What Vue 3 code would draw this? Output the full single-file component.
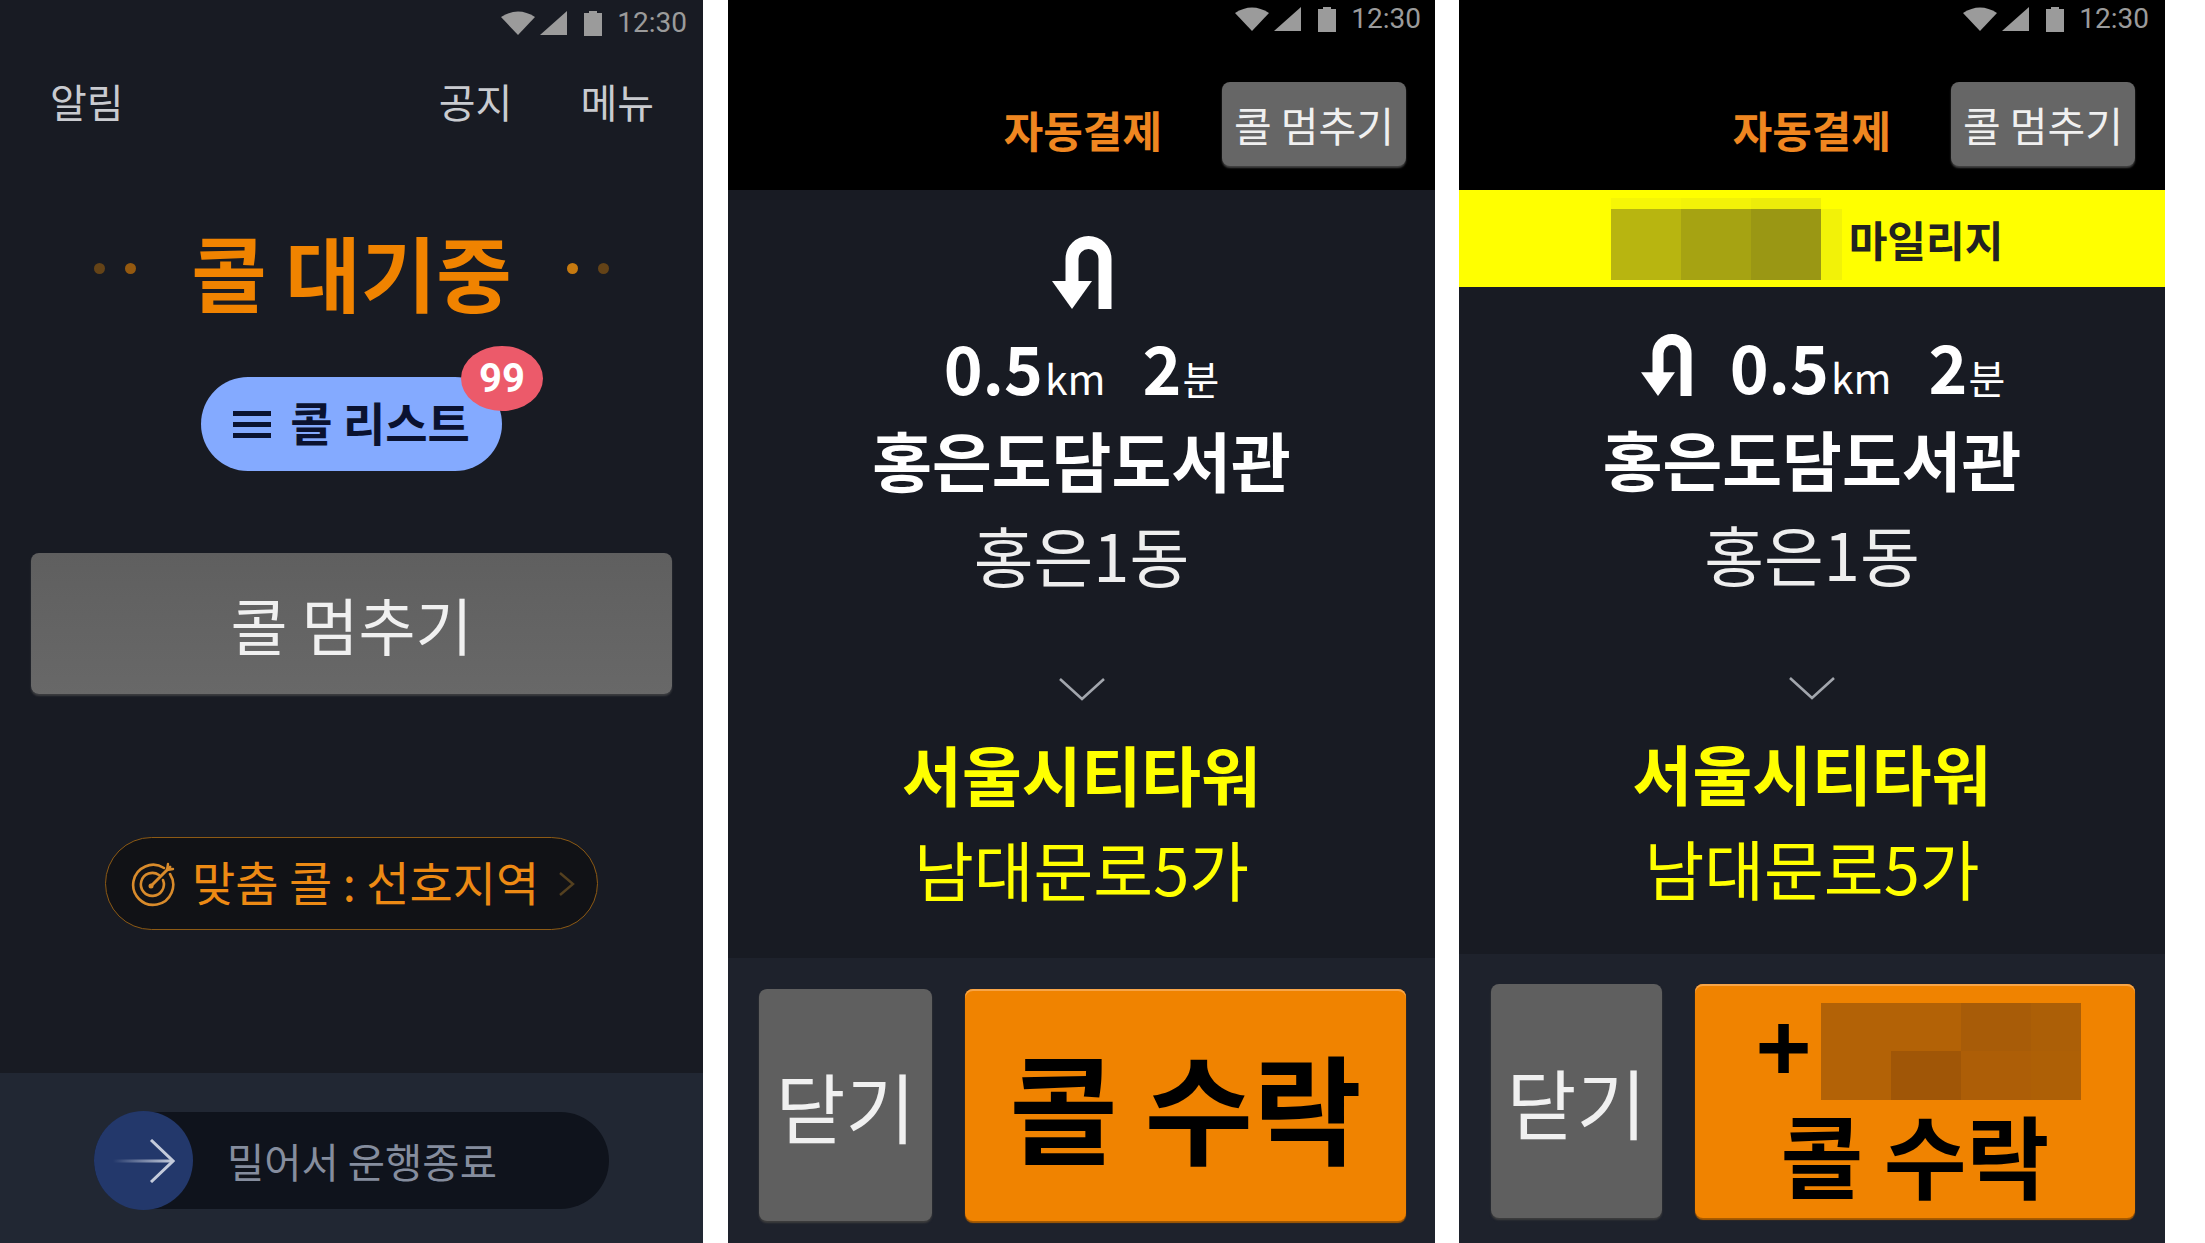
<template>
  <div class="screens">
    <!-- 대기 화면 -->
    <section class="phone idle">
      <div class="status">
        <svg class="wifi" viewBox="0 0 34 24"><path d="M0 6Q17-5 34 6L17 24Z" /></svg>
        <svg class="signal" viewBox="0 0 27 24"><path d="M27 0V24H0Z" /></svg>
        <svg class="battery" viewBox="0 0 18 25"><path d="M5 0H13V2H18V25H0V2H5Z" /></svg>
        <span class="time">12:30</span>
      </div>
      <nav class="nav">
        <span>알림</span>
        <div class="nav-right">
          <span>공지</span>
          <span>메뉴</span>
        </div>
      </nav>
      <div class="title-row">
        <div class="dots">
          <i class="dot dim"></i>
          <i class="dot"></i>
        </div>
        <h1 class="title">콜 대기중</h1>
        <div class="dots">
          <i class="dot bright"></i>
          <i class="dot dim"></i>
        </div>
      </div>
      <button class="list-btn">
        <span class="burger"><i></i><i></i><i></i></span>
        <span class="list-text">콜 리스트</span>
        <b class="badge">99</b>
      </button>
      <button class="stop-big">콜 멈추기</button>
      <div class="pill">
        <svg class="target" viewBox="0 0 46 46" fill="none" stroke="#d98b2b" stroke-width="2.6" stroke-linecap="round">
          <path d="M34 7A20 20 0 1 0 40 13" />
          <path d="M29 14A11.500 11.500 0 1 0 33 19" />
          <path d="M21 25L40 6" stroke-width="3" />
          <path d="M38 3L37 9L43 8" stroke-width="2.400" />
          <circle cx="21" cy="25" r="2.500" fill="#d98b2b" stroke="none" />
        </svg>
        <span class="pill-text">맞춤 콜 : 선호지역</span>
        <svg class="pill-arrow" viewBox="0 0 17 24" fill="none" stroke="#54401f" stroke-width="2.400"><path d="M2 1L15 12L2 23" /></svg>
      </div>
      <div class="idle-bottom">
        <div class="slider">
          <div class="knob">
            <svg viewBox="0 0 62 44" width="62" height="44" fill="none" stroke-width="3">
              <defs>
                <linearGradient id="shaft">
                  <stop offset="0" stop-color="#c4cbdb" stop-opacity="0" />
                  <stop offset="1" stop-color="#c4cbdb" />
                </linearGradient>
              </defs>
              <path d="M0 20.500H59V23.500H0Z" fill="url(#shaft)" stroke="none" />
              <path d="M38 1L60 22L38 43" stroke="#c4cbdb" />
            </svg>
          </div>
          <span class="slider-text">밀어서 운행종료</span>
        </div>
      </div>
    </section>

    <!-- 콜 수신 화면 -->
    <section v-for="call in calls" :key="call.id" class="phone incoming" :class="{ mileage: call.mileage }">
      <header class="top">
        <div class="status">
          <svg class="wifi" viewBox="0 0 34 24"><path d="M0 6Q17-5 34 6L17 24Z" /></svg>
          <svg class="signal" viewBox="0 0 27 24"><path d="M27 0V24H0Z" /></svg>
          <svg class="battery" viewBox="0 0 18 25"><path d="M5 0H13V2H18V25H0V2H5Z" /></svg>
          <span class="time">12:30</span>
        </div>
        <div class="top-row">
          <span class="auto-pay">자동결제</span>
          <button class="stop-small">콜 멈추기</button>
        </div>
      </header>

      <div v-if="call.mileage" class="band">
        <div class="band-blur">
          <i v-for="(c, i) in bandCells" :key="i" :style="{ background: c }"></i>
        </div>
        <span class="band-text">마일리지</span>
      </div>

      <main class="route">
        <svg v-if="!call.mileage" class="uturn" viewBox="0 0 60 73">
          <path d="M53 73V23A16.500 16.500 0 0 0 20 23V46" fill="none" stroke="#fff" stroke-width="13" />
          <path d="M0 45H40L20 73Z" fill="#fff" />
        </svg>
        <div class="metrics">
          <svg v-if="call.mileage" class="uturn inline" viewBox="0 0 60 73">
            <path d="M53 73V23A16.500 16.500 0 0 0 20 23V46" fill="none" stroke="#fff" stroke-width="13" />
            <path d="M0 45H40L20 73Z" fill="#fff" />
          </svg>
          <b class="num">0.5</b><span class="unit">km</span>
          <b class="num second">2</b><span class="unit small">분</span>
        </div>
        <div class="place bold">홍은도담도서관</div>
        <div class="place sub">홍은1동</div>
        <svg class="down" viewBox="0 0 46 24" fill="none" stroke="#a2a6ad" stroke-width="2.600"><path d="M1 2L23 22L45 2" /></svg>
        <div class="place bold dest">서울시티타워</div>
        <div class="place sub dest second-line">남대문로5가</div>
      </main>

      <footer class="actions">
        <button class="close">닫기</button>
        <button class="accept">
          <div v-if="call.mileage" class="bonus">
            <span class="plus">+</span>
            <div class="bonus-blur">
              <i v-for="(c, i) in bonusCells" :key="i" :style="{ background: c }"></i>
            </div>
          </div>
          <span class="accept-text">콜 수락</span>
        </button>
      </footer>
    </section>
  </div>
</template>

<script setup>
const calls = [
  { id: 1, mileage: false },
  { id: 2, mileage: true },
];

// 가려진 금액 영역
const bandCells = ["#f6f606", "#f2f208", "#ecec0a", "#ffff00", "#b8b510", "#a6a312", "#9a9714", "#f2f208"];
const bonusCells = ["#b36206", "#b36206", "#a85c08", "#ac5f07", "#b36206", "#a05607", "#ad5e07", "#ae6006"];
</script>

<style>
html,
body {
  margin: 0;
  background: #fff;
}
</style>

<style scoped>
.screens {
  display: flex;
  width: 2205px;
  height: 1243px;
  overflow: hidden;
  background: #fff;
  font-family: "Noto Sans CJK KR", "Noto Sans", sans-serif;
}

.phone {
  display: flex;
  flex-direction: column;
  flex: none;
  height: 1243px;
  box-sizing: border-box;
  background: #181b23;
}

.idle {
  width: 703px;
}

.incoming {
  width: 707px;
  margin-left: 25px;
}

.mileage {
  width: 706px;
  margin-left: 24px;
}

button {
  display: block;
  border: 0;
  padding: 0;
  font-family: inherit;
}

/* status bar */
.status {
  display: flex;
  align-items: center;
  justify-content: flex-end;
  height: 46px;
  padding-right: 16px;
  box-sizing: border-box;
  color: #9b9b9b;
}

.incoming .status {
  height: 38px;
  padding-right: 14px;
}

.mileage .status {
  padding-right: 16px;
}

.status svg {
  flex: none;
  fill: #9b9b9b;
}

.wifi {
  width: 34px;
  height: 24px;
}

.signal {
  width: 27px;
  height: 24px;
  margin-left: 5px;
}

.battery {
  width: 18px;
  height: 25px;
  margin-left: 17px;
}

.time {
  margin-left: 15px;
  font: 28px/36px Roboto, sans-serif;
}

/* idle */
.nav {
  display: flex;
  justify-content: space-between;
  align-items: center;
  height: 110px;
  padding: 0 49px 0 50px;
  color: #c9cbd0;
  font-size: 40px;
  line-height: 50px;
}

.nav-right {
  display: flex;
  gap: 68px;
}

.title-row {
  display: flex;
  align-items: center;
  justify-content: center;
  gap: 55px;
  height: 100px;
  margin-top: 62px;
}

.title {
  position: relative;
  top: 3px;
  margin: 0;
  color: #f08300;
  font-size: 82px;
  font-weight: 700;
  line-height: 100px;
}

.dots {
  display: flex;
  gap: 20px;
}

.dot {
  display: block;
  width: 11px;
  height: 11px;
  border-radius: 50%;
  background: #94590f;
}

.dot.dim {
  background: #644317;
}

.dot.bright {
  background: #c67a10;
}

.list-btn {
  position: relative;
  display: flex;
  align-items: center;
  justify-content: center;
  gap: 19px;
  align-self: center;
  flex: none;
  width: 301px;
  height: 94px;
  margin-top: 59px;
  border-radius: 47px;
  background: #84aaff;
  color: #0a1230;
  font-size: 46px;
  font-weight: 700;
  line-height: 60px;
}

.list-text {
  position: relative;
  top: -3px;
}

.burger {
  display: flex;
  flex-direction: column;
  gap: 6px;
  width: 38px;
}

.burger i {
  display: block;
  height: 5px;
  background: #0a1230;
}

.badge {
  position: absolute;
  top: -31px;
  right: -41px;
  width: 82px;
  height: 65px;
  border-radius: 50%;
  background: #ec5a6a;
  color: #fff;
  font: 700 40px/65px Roboto, sans-serif;
  text-align: center;
}

.stop-big {
  flex: none;
  height: 141px;
  margin: 82px 31px 0;
  border-radius: 8px;
  background: linear-gradient(#5f5f5f, #686868);
  box-shadow: 0 2px 2px #3c3d40;
  color: #f0f0f0;
  font-size: 62px;
  line-height: 80px;
}

.pill {
  display: flex;
  align-items: center;
  align-self: center;
  flex: none;
  box-sizing: border-box;
  width: 493px;
  height: 93px;
  margin-top: 143px;
  padding-left: 24px;
  border: 1.5px solid #8d5a14;
  border-radius: 47px;
  background: #111216;
}

.target {
  flex: none;
  width: 46px;
  height: 46px;
}

.pill-text {
  position: relative;
  top: -3px;
  margin-left: 16px;
  color: #ed8a14;
  font-size: 47px;
  line-height: 60px;
  white-space: nowrap;
}

.pill-arrow {
  flex: none;
  width: 17px;
  height: 24px;
  margin-left: 19px;
}

.idle-bottom {
  flex: none;
  box-sizing: border-box;
  height: 170px;
  margin-top: auto;
  padding: 39px 94px 0;
  background: #212733;
}

.slider {
  display: flex;
  align-items: center;
  height: 97px;
  border-radius: 49px;
  background: #0f131c;
}

.knob {
  display: flex;
  align-items: center;
  justify-content: center;
  flex: none;
  width: 99px;
  height: 99px;
  border-radius: 50%;
  background: #23386b;
}

.slider-text {
  margin-left: 34px;
  color: #858d9e;
  font-size: 40.500px;
  line-height: 56px;
  white-space: nowrap;
}

/* incoming call */
.top {
  flex: none;
  height: 190px;
  background: #000;
}

.top-row {
  display: flex;
  justify-content: flex-end;
  align-items: flex-start;
  gap: 60px;
  margin-top: 44px;
  padding-right: 29px;
}

.mileage .top-row {
  padding-right: 30px;
}

.auto-pay {
  position: relative;
  top: 17px;
  color: #ef8620;
  font-size: 43px;
  font-weight: 700;
  line-height: 60px;
}

.stop-small {
  width: 184px;
  height: 84px;
  border-radius: 8px;
  background: #666;
  box-shadow: 0 2px 2px #444;
  color: #f0f0f0;
  font-size: 41px;
  line-height: 60px;
}

.band {
  display: flex;
  align-items: center;
  justify-content: center;
  gap: 7px;
  flex: none;
  height: 97px;
  padding-right: 10px;
  background: #ff0;
}

.band-blur {
  display: grid;
  grid-template-columns: 70px 70px 70px 21px;
  grid-template-rows: 11px 71px;
}

.band-text {
  color: #222;
  font-size: 42px;
  font-weight: 700;
  line-height: 60px;
}

.route {
  display: flex;
  flex-direction: column;
  align-items: center;
  flex: none;
  height: 768px;
  box-sizing: border-box;
  padding-top: 46px;
}

.mileage .route {
  height: 667px;
  padding-top: 43px;
}

.uturn {
  flex: none;
  width: 60px;
  height: 73px;
  margin-bottom: 22px;
}

.uturn.inline {
  width: 51px;
  height: 62px;
  margin: 0 38px 0 0;
  align-self: center;
}

.metrics {
  display: flex;
  align-items: baseline;
  height: 70px;
  color: #fff;
  line-height: 70px;
}

.mileage .metrics {
  margin-left: 22px;
}

.num {
  font-size: 66px;
  font-weight: 700;
}

.num.second {
  margin-left: 37px;
}

.unit {
  margin-left: 2px;
  font-size: 41px;
}

.unit.small {
  margin-left: 1px;
  font-size: 40px;
}

.place {
  flex: none;
  height: 76px;
  color: #fff;
  font-size: 65px;
  line-height: 76px;
  white-space: nowrap;
}

.place.bold {
  margin-top: 20px;
  font-weight: 700;
}

.place.sub {
  margin-top: 19px;
  color: #eee;
}

.place.dest {
  color: #ff0;
}

.place.bold.dest {
  margin-top: 34px;
}

.place.sub.dest {
  margin-top: 19px;
}

.down {
  flex: none;
  width: 46px;
  height: 24px;
  margin-top: 85px;
}

.actions {
  display: flex;
  gap: 33px;
  flex: 1;
  box-sizing: border-box;
  padding: 31px 29px 22px 31px;
  background: #1e222c;
}

.mileage .actions {
  padding: 30px 30px 25px 32px;
}

.close {
  flex: none;
  width: 173px;
  border-radius: 8px;
  background: #5f5f5f;
  box-shadow: 0 2px 2px #3e3e3e;
  color: #f0f0f0;
  font-size: 76px;
  line-height: 90px;
}

.mileage .close {
  width: 171px;
}

.accept {
  display: flex;
  flex-direction: column;
  align-items: center;
  justify-content: center;
  flex: 1;
  border-radius: 8px;
  background: #f08300;
  box-shadow: inset 0 2px 0 #f7a548, 0 2px 1px #a85b00;
  color: #000;
}

.accept-text {
  font-size: 118px;
  font-weight: 700;
  line-height: 140px;
}

.mileage .accept {
  justify-content: flex-start;
  padding-top: 19px;
}

.mileage .accept-text {
  margin-top: 3px;
  font-size: 90px;
  line-height: 100px;
}

.bonus {
  display: flex;
  align-items: center;
  gap: 9px;
  margin-left: 6px;
}

.plus {
  margin-bottom: 8px;
  font: 700 96px/89px "Liberation Sans", sans-serif;
}

.bonus-blur {
  display: grid;
  grid-template-columns: 70px 70px 70px 50px;
  grid-template-rows: 48px 49px;
}
</style>
